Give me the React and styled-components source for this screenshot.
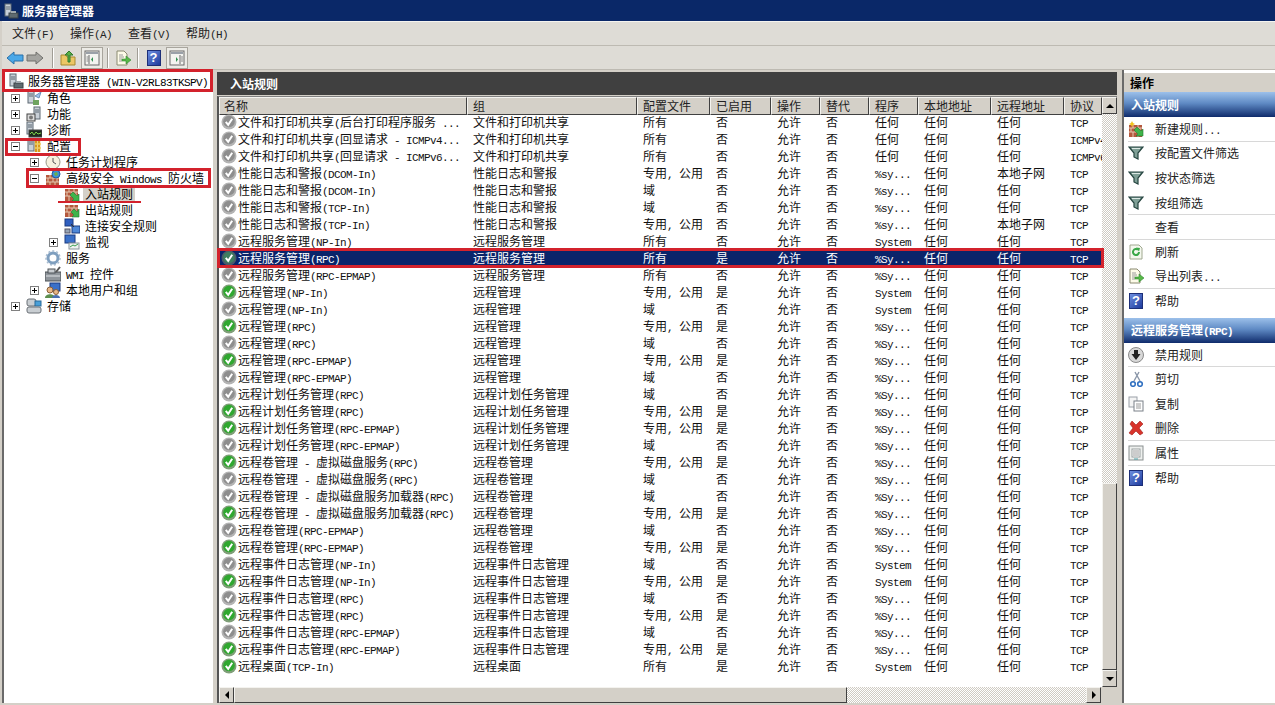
import React from 'react';
import styled, { createGlobalStyle, css } from 'styled-components';

const GlobalStyle = createGlobalStyle`
  html, body {
    margin: 0;
    padding: 0;
    overflow: hidden;
    background: #d4d0c8;
  }
  * {
    box-sizing: border-box;
  }
`;

const raised = css`
  background: #d4d0c8;
  border-top: 1px solid #f4f3ef;
  border-left: 1px solid #f4f3ef;
  border-right: 1px solid #404040;
  border-bottom: 1px solid #404040;
`;

const checker = css`
  background-color: #fff;
  background-image: conic-gradient(#cfcbc3 25%, #fff 0 50%, #cfcbc3 0 75%, #fff 0);
  background-size: 2px 2px;
`;

const Window = styled.div`
  position: relative;
  width: 1275px;
  height: 705px;
  overflow: hidden;
  display: flex;
  flex-direction: column;
  background: #d4d0c8;
  font-family: 'Noto Sans CJK SC', sans-serif;
  font-size: 12px;
  line-height: 16px;
  color: #000;
`;

const TitleBar = styled.div`
  height: 21px;
  display: flex;
  align-items: center;
  gap: 3px;
  padding-left: 3px;
  background: #0a2868;
  color: #fff;
  font-weight: 700;
`;

const MenuBar = styled.div`
  height: 25px;
  display: flex;
  align-items: center;
  gap: 16px;
  padding: 0 0 2px 10px;
  margin-left: 2px;
  background: #dedcd6;
  border-top: 1px solid #f5f4f0;
  border-bottom: 1px solid #bdbab2;
  color: #222;
`;

const MenuItem = styled.div``;

const ToolBar = styled.div`
  height: 24px;
  display: flex;
  align-items: center;
  padding-left: 3px;
  margin-left: 2px;
  background: #dedcd6;
  border-bottom: 1px solid #bdbab2;
`;

const ToolButton = styled.div`
  width: ${(props) => (props.$pressed ? '22px' : '20px')};
  height: 22px;
  display: flex;
  align-items: center;
  justify-content: center;
  margin-right: ${(props) => props.$after || 0}px;
  ${(props) =>
    props.$pressed &&
    css`
      background: #ecebe6;
      border: 1px solid #a8a59d;
    `}
`;

const ToolSeparator = styled.div`
  width: 2px;
  height: 20px;
  margin: 0 4px;
  border-left: 1px solid #a09d95;
  border-right: 1px solid #fff;
`;

const Panes = styled.div`
  flex: 1;
  min-height: 0;
  display: flex;
  padding: 0 0 2px 2px;
`;

const TreePane = styled.div`
  width: 211px;
  margin-right: 4px;
  background: #fff;
  border-left: 2px solid #6a6a6a;
  border-top: 1px solid #6a6a6a;
  display: flex;
  flex-direction: column;
`;

const TreeHead = styled.div`
  height: 19px;
  display: flex;
  align-items: center;
  gap: 4px;
  padding-left: 4px;
  white-space: nowrap;
`;

const TreeRow = styled.div`
  height: 16px;
  display: flex;
  align-items: center;
  padding-left: ${(props) => 7 + props.$level * 19}px;
  white-space: nowrap;
`;

const Expander = styled.div`
  position: relative;
  width: 9px;
  height: 9px;
  margin-right: 6px;
  flex: none;
  border: 1px solid ${(props) => (props.$kind ? '#808080' : 'transparent')};
  &::before {
    content: '';
    display: ${(props) => (props.$kind ? 'block' : 'none')};
    position: absolute;
    left: 1px;
    top: 3px;
    width: 5px;
    height: 1px;
    background: #000;
  }
  &::after {
    content: '';
    display: ${(props) => (props.$kind === 'plus' ? 'block' : 'none')};
    position: absolute;
    left: 3px;
    top: 1px;
    width: 1px;
    height: 5px;
    background: #000;
  }
`;

const TreeLabel = styled.span`
  margin-left: 3px;
  padding: 0 2px;
  background: ${(props) => (props.$selected ? '#d4d0c8' : 'transparent')};
`;

const CenterPane = styled.div`
  width: 900px;
  margin-right: 5px;
  padding-top: 2px;
  display: flex;
  flex-direction: column;
`;

const CenterTitle = styled.div`
  height: 23px;
  flex: none;
  display: flex;
  align-items: center;
  padding-left: 13px;
  margin-bottom: 1px;
  background: #404040;
  color: #fff;
  font-weight: 700;
`;

const ListFrame = styled.div`
  flex: 1;
  min-height: 0;
  display: flex;
  flex-direction: column;
  background: #fff;
  border-top: 1px solid #808080;
  border-left: 2px solid #555;
`;

const ListMain = styled.div`
  flex: 1;
  min-height: 0;
  display: flex;
`;

const ListColumn = styled.div`
  width: 883px;
`;

const columns = '248px 170px 73px 61px 49px 49px 49px 73px 73px 38px';

const HeaderRow = styled.div`
  height: 17px;
  display: grid;
  grid-template-columns: ${columns};
`;

const HeaderCell = styled.div`
  ${raised}
  display: flex;
  align-items: center;
  padding-left: ${(props) => (props.$first ? 4 : 5)}px;
  color: #222;
`;

const Row = styled.div`
  height: 17px;
  display: grid;
  grid-template-columns: ${columns};
  align-items: start;
  background: ${(props) => (props.$selected ? '#0a246a' : 'transparent')};
  color: ${(props) => (props.$selected ? '#fff' : '#111')};
`;

const Cell = styled.div`
  min-width: 0;
  height: 16px;
  overflow: hidden;
  white-space: nowrap;
  padding-left: 6px;
`;

const NameCell = styled(Cell)`
  display: flex;
  align-items: center;
  gap: 1px;
  padding-left: 2px;
  overflow: visible;
`;

const VScroll = styled.div`
  width: 15px;
  display: flex;
  flex-direction: column;
`;

const Track = styled.div`
  flex: 1;
  ${checker}
`;

const VThumb = styled.div`
  ${raised}
  height: 187px;
`;

const ScrollButton = styled.div`
  ${raised}
  flex: none;
  width: 15px;
  height: ${(props) => (props.$tall ? 17 : 16)}px;
  display: flex;
  align-items: center;
  justify-content: center;
`;

const Arrow = styled.div`
  width: 0;
  height: 0;
  border-style: solid;
  border-color: transparent;
  ${(props) =>
    ({
      up: 'border-width: 0 4px 4px; border-bottom-color: #000;',
      down: 'border-width: 4px 4px 0; border-top-color: #000;',
      left: 'border-width: 4px 4px 4px 0; border-right-color: #000;',
      right: 'border-width: 4px 0 4px 4px; border-left-color: #000;',
    })[props.$dir]}
`;

const HScroll = styled.div`
  height: 16px;
  flex: none;
  display: flex;
`;

const HThumb = styled.div`
  ${raised}
  width: 613px;
`;

const ScrollCorner = styled.div`
  width: 16px;
  background: #d4d0c8;
`;

const ActionPane = styled.div`
  width: 153px;
  background: #fff;
  border-left: 2px solid #6a6a6a;
  padding-top: 3px;
  display: flex;
  flex-direction: column;
`;

const ActionTitle = styled.div`
  height: 19px;
  flex: none;
  display: flex;
  align-items: center;
  padding-left: 6px;
  background: #d4d0c8;
  font-weight: 700;
`;

const ActionSection = styled.div`
  height: 25px;
  flex: none;
  display: flex;
  align-items: center;
  padding-left: 7px;
  margin-top: ${(props) => (props.$spaced ? 4 : 0)}px;
  background: linear-gradient(#9cc0ea, #5f8ac4 45%, #0f2b6b);
  color: #fff;
  font-weight: 700;
`;

const ActionItem = styled.div`
  height: 24.6px;
  flex: none;
  display: flex;
  align-items: center;
  gap: 11px;
  margin-left: 4px;
  color: #222;
  border-bottom: 1px solid ${(props) => (props.$line ? '#d8d8d8' : 'transparent')};
`;

const IconSlot = styled.div`
  width: 16px;
  height: 16px;
  flex: none;
`;

const HelpBox = styled.div`
  width: 14px;
  height: 16px;
  margin-left: 1px;
  background: linear-gradient(135deg, #6e8fe0, #1d3a9c);
  border: 1px solid #1d2f78;
  color: #fff;
  font-family: 'Liberation Sans', sans-serif;
  font-size: 13px;
  font-weight: 700;
  line-height: 14px;
  text-align: center;
`;

const Latin = styled.span`
  font-family: 'Liberation Mono', monospace;
  font-size: 11px;
  line-height: 1;
  letter-spacing: -0.6px;
  white-space: pre;
`;

const Mark = styled.div`
  position: absolute;
  left: ${(props) => props.$x}px;
  top: ${(props) => props.$y}px;
  width: ${(props) => props.$w}px;
  height: ${(props) => props.$h}px;
  border: ${(props) => (props.$line ? '0' : '3px solid #d3222c')};
  background: ${(props) => (props.$line ? '#d3222c' : 'transparent')};
  pointer-events: none;
`;

// CJK is 12px wide and latin 6px wide in the original bitmap font
const T = ({ children }) =>
  String(children)
    .split(/([\x20-\x7e]+)/)
    .filter(Boolean)
    .map((part, i) =>
      /^[\x20-\x7e]+$/.test(part) ? <Latin key={i}>{part}</Latin> : <span key={i}>{part}</span>
    );

const Svg = ({ children, w = 16, h = 16 }) => (
  <svg width={w} height={h} viewBox={`0 0 ${w} ${h}`} style={{ flex: 'none', display: 'block' }}>
    {children}
  </svg>
);

const Tower = ({ x = 2, y = 1 }) => (
  <g>
    <rect x={x} y={y} width="6" height="12" fill="#c9d0d8" stroke="#5d6873" />
    <path d={`M${x + 1} ${y + 3}h4M${x + 1} ${y + 5}h4`} stroke="#5d6873" />
  </g>
);

const ServerIcon = () => (
  <Svg>
    <Tower />
    <rect x="6" y="10" width="9" height="5" fill="#5f6a70" stroke="#3b4247" />
    <path d="M8 9h5" stroke="#a0a8ae" strokeWidth="2" />
  </Svg>
);

const RolesIcon = () => (
  <Svg>
    <Tower />
    <path d="M9 6l6-4-2 6z" fill="#9fc4ec" stroke="#6c8fb8" />
    <rect x="7" y="10" width="6" height="5" fill="#6ea35f" />
  </Svg>
);

const FeaturesIcon = () => (
  <Svg>
    <Tower x={8} y={1} />
    <rect x="1" y="8" width="8" height="7" fill="#dcdcdc" stroke="#444" />
    <circle cx="5" cy="11.5" r="2" fill="#777" />
  </Svg>
);

const DiagIcon = () => (
  <Svg>
    <Tower x={1} y={0} />
    <rect x="3" y="8" width="13" height="7" fill="#1e2a1e" stroke="#444" />
    <path d="M4 12l2-2 2 3 2-3 2 2 3-1" stroke="#7dd04b" fill="none" />
  </Svg>
);

const ConfigIcon = () => (
  <Svg>
    <Tower />
    <path d="M10 2v12M13 2v12" stroke="#d99a1c" strokeWidth="2.5" />
    <path d="M9 6h6M9 10h6" stroke="#f0d060" strokeWidth="1.5" />
  </Svg>
);

const ClockIcon = () => (
  <Svg>
    <circle cx="8" cy="8" r="7" fill="#f6f1de" stroke="#9a9a8a" />
    <path d="M8 4v4l3 2" stroke="#555" fill="none" />
  </Svg>
);

const Bricks = ({ w = 13, h = 13, y = 3 }) => (
  <g>
    <rect x="1" y={y} width={w} height={h - 1} fill="#b4583d" />
    <path
      d={`M1 ${y + 3}h${w}M1 ${y + 7}h${w}M5 ${y}v3M10 ${y}v3M3 ${y + 3}v4M8 ${y + 3}v4M12 ${y + 3}v4M5 ${y + 7}v5M10 ${y + 7}v5`}
      stroke="#e4c8b0"
    />
  </g>
);

const WallIcon = () => (
  <Svg>
    <Bricks y={5} h={11} />
    <circle cx="11" cy="4" r="4" fill="#3f8fd8" stroke="#1f5f9f" />
    <path d="M9 3l3-1 1 3-3 1z" fill="#69b04a" />
  </Svg>
);

const GreenArrow = ({ d }) => <path d={d} fill="#3fb44a" stroke="#1f7a30" strokeWidth="0.6" />;

const InboundIcon = () => (
  <Svg>
    <Bricks />
    <GreenArrow d="M15 15H8l2-2-4-4 3-3 4 4 2-2z" />
  </Svg>
);

const OutboundIcon = () => (
  <Svg>
    <Bricks />
    <GreenArrow d="M15 7v8H8l2-2-3-3 3-3 3 3z" />
  </Svg>
);

const NewRuleIcon = () => (
  <Svg>
    <Bricks y={4} />
    <path d="M4 0l1 2 2 1-2 1-1 2-1-2-2-1 2-1z" fill="#f2c31c" />
    <GreenArrow d="M15 15H8l2-2-4-4 3-3 4 4 2-2z" />
  </Svg>
);

const SecurityIcon = () => (
  <Svg>
    <rect x="1" y="1" width="8" height="7" fill="#2f5fc0" stroke="#1b3a80" />
    <rect x="8" y="8" width="8" height="7" fill="#4f88d8" stroke="#1b3a80" />
    <rect x="1" y="11" width="5" height="4" fill="#98a4b4" stroke="#556" />
    <path d="M7 6l3 3" stroke="#333" />
  </Svg>
);

const MonitorIcon = () => (
  <Svg>
    <rect x="1" y="1" width="10" height="8" fill="#3a70c8" stroke="#1b3a80" />
    <rect x="5" y="9" width="10" height="6" fill="#eef2f0" stroke="#8a949a" />
    <path d="M6 13l3-2 2 1 3-2" stroke="#3aa050" fill="none" />
  </Svg>
);

const GearIcon = () => (
  <Svg>
    <circle cx="8" cy="8" r="5" fill="none" stroke="#7f9fbf" strokeWidth="3" />
    <circle cx="8" cy="8" r="7" fill="none" stroke="#a8bcd0" strokeWidth="1.5" strokeDasharray="2 2" />
  </Svg>
);

const WmiIcon = () => (
  <Svg>
    <rect x="0" y="6" width="16" height="9" fill="#8f959b" stroke="#4c5257" />
    <rect x="3" y="3" width="7" height="4" fill="#c8ccd0" stroke="#4c5257" />
    <path d="M11 6l4-5" stroke="#555" strokeWidth="2" />
    <path d="M1 10h14" stroke="#dfe2e5" />
  </Svg>
);

const UsersIcon = () => (
  <Svg>
    <rect x="5" y="1" width="10" height="8" fill="#3a70c8" stroke="#1b3a80" />
    <circle cx="5" cy="8" r="3" fill="#e8b888" stroke="#8a6038" />
    <path d="M0 16c0-5 10-5 10 0z" fill="#5d8f4f" />
    <circle cx="11" cy="10" r="2.5" fill="#e8b888" stroke="#8a6038" />
    <path d="M7 16c0-4 8-4 8 0z" fill="#4a6fb0" />
  </Svg>
);

const StorageIcon = () => (
  <Svg>
    <rect x="1" y="1" width="9" height="7" rx="2" fill="#c9ced2" stroke="#6a7076" />
    <rect x="9" y="3" width="6" height="5" fill="#4aa0d8" stroke="#2a6a98" />
    <rect x="1" y="9" width="14" height="6" rx="2" fill="#c9ced2" stroke="#6a7076" />
  </Svg>
);

const StatusIcon = ({ enabled, selected }) => {
  const fill = selected ? '#3f7f60' : enabled ? '#2fa82f' : '#8e8e8e';
  const ring = selected ? '#4a5a6a' : enabled ? '#7f9f78' : '#b4b4b4';
  return (
    <Svg>
      <circle cx="8" cy="8" r="7.5" fill={ring} />
      <circle cx="8" cy="7.5" r="5.8" fill={fill} />
      <path d="M4.8 7.8l2.4 3 4-6" fill="none" stroke="#fff" strokeWidth="2" />
    </Svg>
  );
};

const BackIcon = () => (
  <Svg w={18}>
    <path d="M1 8l7-6v3h9v6H8v3z" fill="#4aa8e8" stroke="#2a70a8" />
  </Svg>
);

const ForwardIcon = () => (
  <Svg w={18}>
    <path d="M17 8l-7-6v3H1v6h9v3z" fill="#a4a4a0" stroke="#70706c" />
  </Svg>
);

const UpFolderIcon = () => (
  <Svg>
    <path d="M1 5h5l1 2h8v8H1z" fill="#ecc766" stroke="#a88a30" />
    <path d="M8 12V5H5l4-4 4 4h-3v7z" fill="#58b048" stroke="#2f7a2a" />
  </Svg>
);

const PanelIcon = ({ right }) => (
  <Svg>
    <rect x="1" y="1" width="14" height="14" fill="#f4f4f0" stroke="#6a6a6a" />
    <rect x="2" y="2" width="12" height="2" fill="#9aa0a8" />
    <path d={right ? 'M11 5v9' : 'M5 5v9'} stroke="#6a6a6a" />
    <path d={right ? 'M7 7l2 2.5L7 12z' : 'M9 7L7 9.5 9 12z'} fill="#2f8f4f" />
    <path d={right ? 'M12 7h2M12 9h2M12 11h2' : 'M2.5 7h2M2.5 9h2M2.5 11h2'} stroke="#888" />
  </Svg>
);

const ExportIcon = () => (
  <Svg>
    <path d="M2 1h7l3 3v11H2z" fill="#fdfbe8" stroke="#8a8a70" />
    <path d="M4 5h4M4 7h5M4 9h3M4 11h3" stroke="#9a9a9a" />
    <path d="M7 9h4V6l5 4-5 4v-3H7z" fill="#58b848" stroke="#2f8a30" strokeWidth="0.6" />
  </Svg>
);

const RefreshIcon = () => (
  <Svg>
    <path d="M2 1h9l3 3v11H2z" fill="#f4f8ee" stroke="#a0a890" />
    <path d="M11 8a3 3 0 1 1-1-2.2" fill="none" stroke="#3aa848" strokeWidth="2" />
    <path d="M8 3.5l4 .5-1 3.5z" fill="#3aa848" />
  </Svg>
);

const FunnelIcon = () => (
  <Svg>
    <path d="M1 2h14L10 8v6l-4-2V8z" fill="#7f9f96" stroke="#24433f" strokeWidth="1.2" />
    <path d="M4 3.5h8" stroke="#dbe8e4" />
  </Svg>
);

const DisableIcon = () => (
  <Svg>
    <circle cx="8" cy="8" r="7.5" fill="#d8d8d8" stroke="#8a8a8a" />
    <path d="M6 3h4v4h2.5L8 13 3.5 7H6z" fill="#222" />
  </Svg>
);

const CutIcon = () => (
  <Svg>
    <path d="M11 1L6 10M7 1l5 9" stroke="#8a96a8" strokeWidth="1.4" />
    <circle cx="5" cy="13" r="2.3" fill="none" stroke="#2f6fc0" strokeWidth="1.6" />
    <circle cx="12" cy="13" r="2.3" fill="none" stroke="#2f6fc0" strokeWidth="1.6" />
  </Svg>
);

const CopyIcon = () => (
  <Svg>
    <rect x="1" y="1" width="8" height="10" fill="#f4f4f4" stroke="#9aa0a8" />
    <rect x="6" y="5" width="9" height="10" fill="#fff" stroke="#7a8088" />
    <path d="M8 8h5M8 10h5M8 12h5" stroke="#9a9a9a" />
  </Svg>
);

const DeleteIcon = () => (
  <Svg>
    <path d="M2 4l2-3 4 4 4-4 3 3-4 4 4 5-3 2-4-4-4 4-3-2 4-5z" fill="#d8342c" stroke="#a01c18" strokeWidth="0.6" />
  </Svg>
);

const PropsIcon = () => (
  <Svg>
    <rect x="1" y="1" width="14" height="14" fill="#eef0ee" stroke="#8a9090" />
    <rect x="4" y="4" width="8" height="8" fill="#fff" stroke="#9aa0a0" />
    <path d="M5 6h6M5 8h6M5 10h6" stroke="#9a9a9a" />
    <path d="M6 14h4" stroke="#4aa0a8" />
  </Svg>
);

const treeItems = [
  { label: '角色', level: 0, kind: 'plus', Icon: RolesIcon },
  { label: '功能', level: 0, kind: 'plus', Icon: FeaturesIcon },
  { label: '诊断', level: 0, kind: 'plus', Icon: DiagIcon },
  { label: '配置', level: 0, kind: 'minus', Icon: ConfigIcon },
  { label: '任务计划程序', level: 1, kind: 'plus', Icon: ClockIcon },
  { label: '高级安全 Windows 防火墙', level: 1, kind: 'minus', Icon: WallIcon },
  { label: '入站规则', level: 2, Icon: InboundIcon, selected: true },
  { label: '出站规则', level: 2, Icon: OutboundIcon },
  { label: '连接安全规则', level: 2, Icon: SecurityIcon },
  { label: '监视', level: 2, kind: 'plus', Icon: MonitorIcon },
  { label: '服务', level: 1, Icon: GearIcon },
  { label: 'WMI 控件', level: 1, Icon: WmiIcon },
  { label: '本地用户和组', level: 1, kind: 'plus', Icon: UsersIcon },
  { label: '存储', level: 0, kind: 'plus', Icon: StorageIcon },
];

const headers = ['名称', '组', '配置文件', '已启用', '操作', '替代', '程序', '本地地址', '远程地址', '协议'];

const BOTH = '专用, 公用';
const FILE = '文件和打印机共享';
const PERF = '性能日志和警报';
const SVC = '远程服务管理';
const MGMT = '远程管理';
const TASK = '远程计划任务管理';
const VOL = '远程卷管理';
const EVT = '远程事件日志管理';

// name, group, profile, enabled, program, remote address, protocol
const rules = [
  [FILE + '(后台打印程序服务 ...', FILE, '所有', 0, '任何', '任何', 'TCP'],
  [FILE + '(回显请求 - ICMPv4...', FILE, '所有', 0, '任何', '任何', 'ICMPv4'],
  [FILE + '(回显请求 - ICMPv6...', FILE, '所有', 0, '任何', '任何', 'ICMPv6'],
  [PERF + '(DCOM-In)', PERF, BOTH, 0, '%sy...', '本地子网', 'TCP'],
  [PERF + '(DCOM-In)', PERF, '域', 0, '%sy...', '任何', 'TCP'],
  [PERF + '(TCP-In)', PERF, '域', 0, '%sy...', '任何', 'TCP'],
  [PERF + '(TCP-In)', PERF, BOTH, 0, '%sy...', '本地子网', 'TCP'],
  [SVC + '(NP-In)', SVC, '所有', 0, 'System', '任何', 'TCP'],
  [SVC + '(RPC)', SVC, '所有', 1, '%Sy...', '任何', 'TCP', true],
  [SVC + '(RPC-EPMAP)', SVC, '所有', 0, '%Sy...', '任何', 'TCP'],
  [MGMT + '(NP-In)', MGMT, BOTH, 1, 'System', '任何', 'TCP'],
  [MGMT + '(NP-In)', MGMT, '域', 0, 'System', '任何', 'TCP'],
  [MGMT + '(RPC)', MGMT, BOTH, 1, '%Sy...', '任何', 'TCP'],
  [MGMT + '(RPC)', MGMT, '域', 0, '%Sy...', '任何', 'TCP'],
  [MGMT + '(RPC-EPMAP)', MGMT, BOTH, 1, '%Sy...', '任何', 'TCP'],
  [MGMT + '(RPC-EPMAP)', MGMT, '域', 0, '%Sy...', '任何', 'TCP'],
  [TASK + '(RPC)', TASK, '域', 0, '%Sy...', '任何', 'TCP'],
  [TASK + '(RPC)', TASK, BOTH, 1, '%Sy...', '任何', 'TCP'],
  [TASK + '(RPC-EPMAP)', TASK, BOTH, 1, '%Sy...', '任何', 'TCP'],
  [TASK + '(RPC-EPMAP)', TASK, '域', 0, '%Sy...', '任何', 'TCP'],
  [VOL + ' - 虚拟磁盘服务(RPC)', VOL, BOTH, 1, '%Sy...', '任何', 'TCP'],
  [VOL + ' - 虚拟磁盘服务(RPC)', VOL, '域', 0, '%Sy...', '任何', 'TCP'],
  [VOL + ' - 虚拟磁盘服务加载器(RPC)', VOL, '域', 0, '%Sy...', '任何', 'TCP'],
  [VOL + ' - 虚拟磁盘服务加载器(RPC)', VOL, BOTH, 1, '%Sy...', '任何', 'TCP'],
  [VOL + '(RPC-EPMAP)', VOL, '域', 0, '%Sy...', '任何', 'TCP'],
  [VOL + '(RPC-EPMAP)', VOL, BOTH, 1, '%Sy...', '任何', 'TCP'],
  [EVT + '(NP-In)', EVT, '域', 0, 'System', '任何', 'TCP'],
  [EVT + '(NP-In)', EVT, BOTH, 1, 'System', '任何', 'TCP'],
  [EVT + '(RPC)', EVT, '域', 0, '%Sy...', '任何', 'TCP'],
  [EVT + '(RPC)', EVT, BOTH, 1, '%Sy...', '任何', 'TCP'],
  [EVT + '(RPC-EPMAP)', EVT, '域', 0, '%Sy...', '任何', 'TCP'],
  [EVT + '(RPC-EPMAP)', EVT, BOTH, 1, '%Sy...', '任何', 'TCP'],
  ['远程桌面(TCP-In)', '远程桌面', '所有', 1, 'System', '任何', 'TCP'],
];

const ruleActions = [
  { label: '新建规则...', Icon: NewRuleIcon, line: true },
  { label: '按配置文件筛选', Icon: FunnelIcon },
  { label: '按状态筛选', Icon: FunnelIcon },
  { label: '按组筛选', Icon: FunnelIcon, line: true },
  { label: '查看', line: true },
  { label: '刷新', Icon: RefreshIcon },
  { label: '导出列表...', Icon: ExportIcon, line: true },
  { label: '帮助', help: true },
];

const itemActions = [
  { label: '禁用规则', Icon: DisableIcon, line: true },
  { label: '剪切', Icon: CutIcon },
  { label: '复制', Icon: CopyIcon },
  { label: '删除', Icon: DeleteIcon, line: true },
  { label: '属性', Icon: PropsIcon, line: true },
  { label: '帮助', help: true },
];

const Actions = ({ items }) =>
  items.map((item) => (
    <ActionItem key={item.label} $line={item.line}>
      <IconSlot>
        {item.help ? <HelpBox>?</HelpBox> : item.Icon && <item.Icon />}
      </IconSlot>
      <span>
        <T>{item.label}</T>
      </span>
    </ActionItem>
  ));

export default function App() {
  return (
    <Window>
      <GlobalStyle />
      <TitleBar>
        <ServerIcon />
        服务器管理器
      </TitleBar>
      <MenuBar>
        {['文件(F)', '操作(A)', '查看(V)', '帮助(H)'].map((m) => (
          <MenuItem key={m}>
            <T>{m}</T>
          </MenuItem>
        ))}
      </MenuBar>
      <ToolBar>
        <ToolButton>
          <BackIcon />
        </ToolButton>
        <ToolButton $after={3}>
          <ForwardIcon />
        </ToolButton>
        <ToolSeparator />
        <ToolButton $after={3}>
          <UpFolderIcon />
        </ToolButton>
        <ToolButton $pressed>
          <PanelIcon />
        </ToolButton>
        <ToolSeparator />
        <ToolButton>
          <ExportIcon />
        </ToolButton>
        <ToolSeparator />
        <ToolButton $after={3}>
          <HelpBox>?</HelpBox>
        </ToolButton>
        <ToolButton $pressed>
          <PanelIcon right />
        </ToolButton>
      </ToolBar>
      <Panes>
        <TreePane>
          <TreeHead>
            <ServerIcon />
            <span>
              <T>服务器管理器 (WIN-V2RL83TKSPV)</T>
            </span>
          </TreeHead>
          {treeItems.map(({ label, level, kind, Icon, selected }) => (
            <TreeRow key={label} $level={level}>
              <Expander $kind={kind} />
              <Icon />
              <TreeLabel $selected={selected}>
                <T>{label}</T>
              </TreeLabel>
            </TreeRow>
          ))}
        </TreePane>
        <CenterPane>
          <CenterTitle>入站规则</CenterTitle>
          <ListFrame>
            <ListMain>
              <ListColumn>
                <HeaderRow>
                  {headers.map((h, i) => (
                    <HeaderCell key={h} $first={i === 0}>
                      {h}
                    </HeaderCell>
                  ))}
                </HeaderRow>
                {rules.map(([name, group, profile, enabled, program, remote, protocol, selected], i) => (
                  <Row key={i} $selected={selected}>
                    <NameCell>
                      <StatusIcon enabled={enabled} selected={selected} />
                      <span>
                        <T>{name}</T>
                      </span>
                    </NameCell>
                    <Cell>{group}</Cell>
                    <Cell>
                      <T>{profile}</T>
                    </Cell>
                    <Cell>{enabled ? '是' : '否'}</Cell>
                    <Cell>允许</Cell>
                    <Cell>否</Cell>
                    <Cell>
                      <T>{program}</T>
                    </Cell>
                    <Cell>任何</Cell>
                    <Cell>{remote}</Cell>
                    <Cell>
                      <T>{protocol}</T>
                    </Cell>
                  </Row>
                ))}
              </ListColumn>
              <VScroll>
                <ScrollButton $tall>
                  <Arrow $dir="up" />
                </ScrollButton>
                <Track />
                <VThumb />
                <ScrollButton $tall>
                  <Arrow $dir="down" />
                </ScrollButton>
              </VScroll>
            </ListMain>
            <HScroll>
              <ScrollButton>
                <Arrow $dir="left" />
              </ScrollButton>
              <HThumb />
              <Track />
              <ScrollButton>
                <Arrow $dir="right" />
              </ScrollButton>
              <ScrollCorner />
            </HScroll>
          </ListFrame>
        </CenterPane>
        <ActionPane>
          <ActionTitle>操作</ActionTitle>
          <ActionSection>入站规则</ActionSection>
          <Actions items={ruleActions} />
          <ActionSection $spaced>
            <span>
              <T>远程服务管理(RPC)</T>
            </span>
          </ActionSection>
          <Actions items={itemActions} />
        </ActionPane>
      </Panes>
      {/* red annotations drawn over the screenshot */}
      <Mark $x={2} $y={69} $w={211} $h={23} />
      <Mark $x={5} $y={138} $w={76} $h={18} />
      <Mark $x={26} $y={168} $w={185} $h={20} />
      <Mark $line $x={58} $y={201} $w={83} $h={2} />
      <Mark $x={217} $y={248} $w={887} $h={20} />
    </Window>
  );
}
